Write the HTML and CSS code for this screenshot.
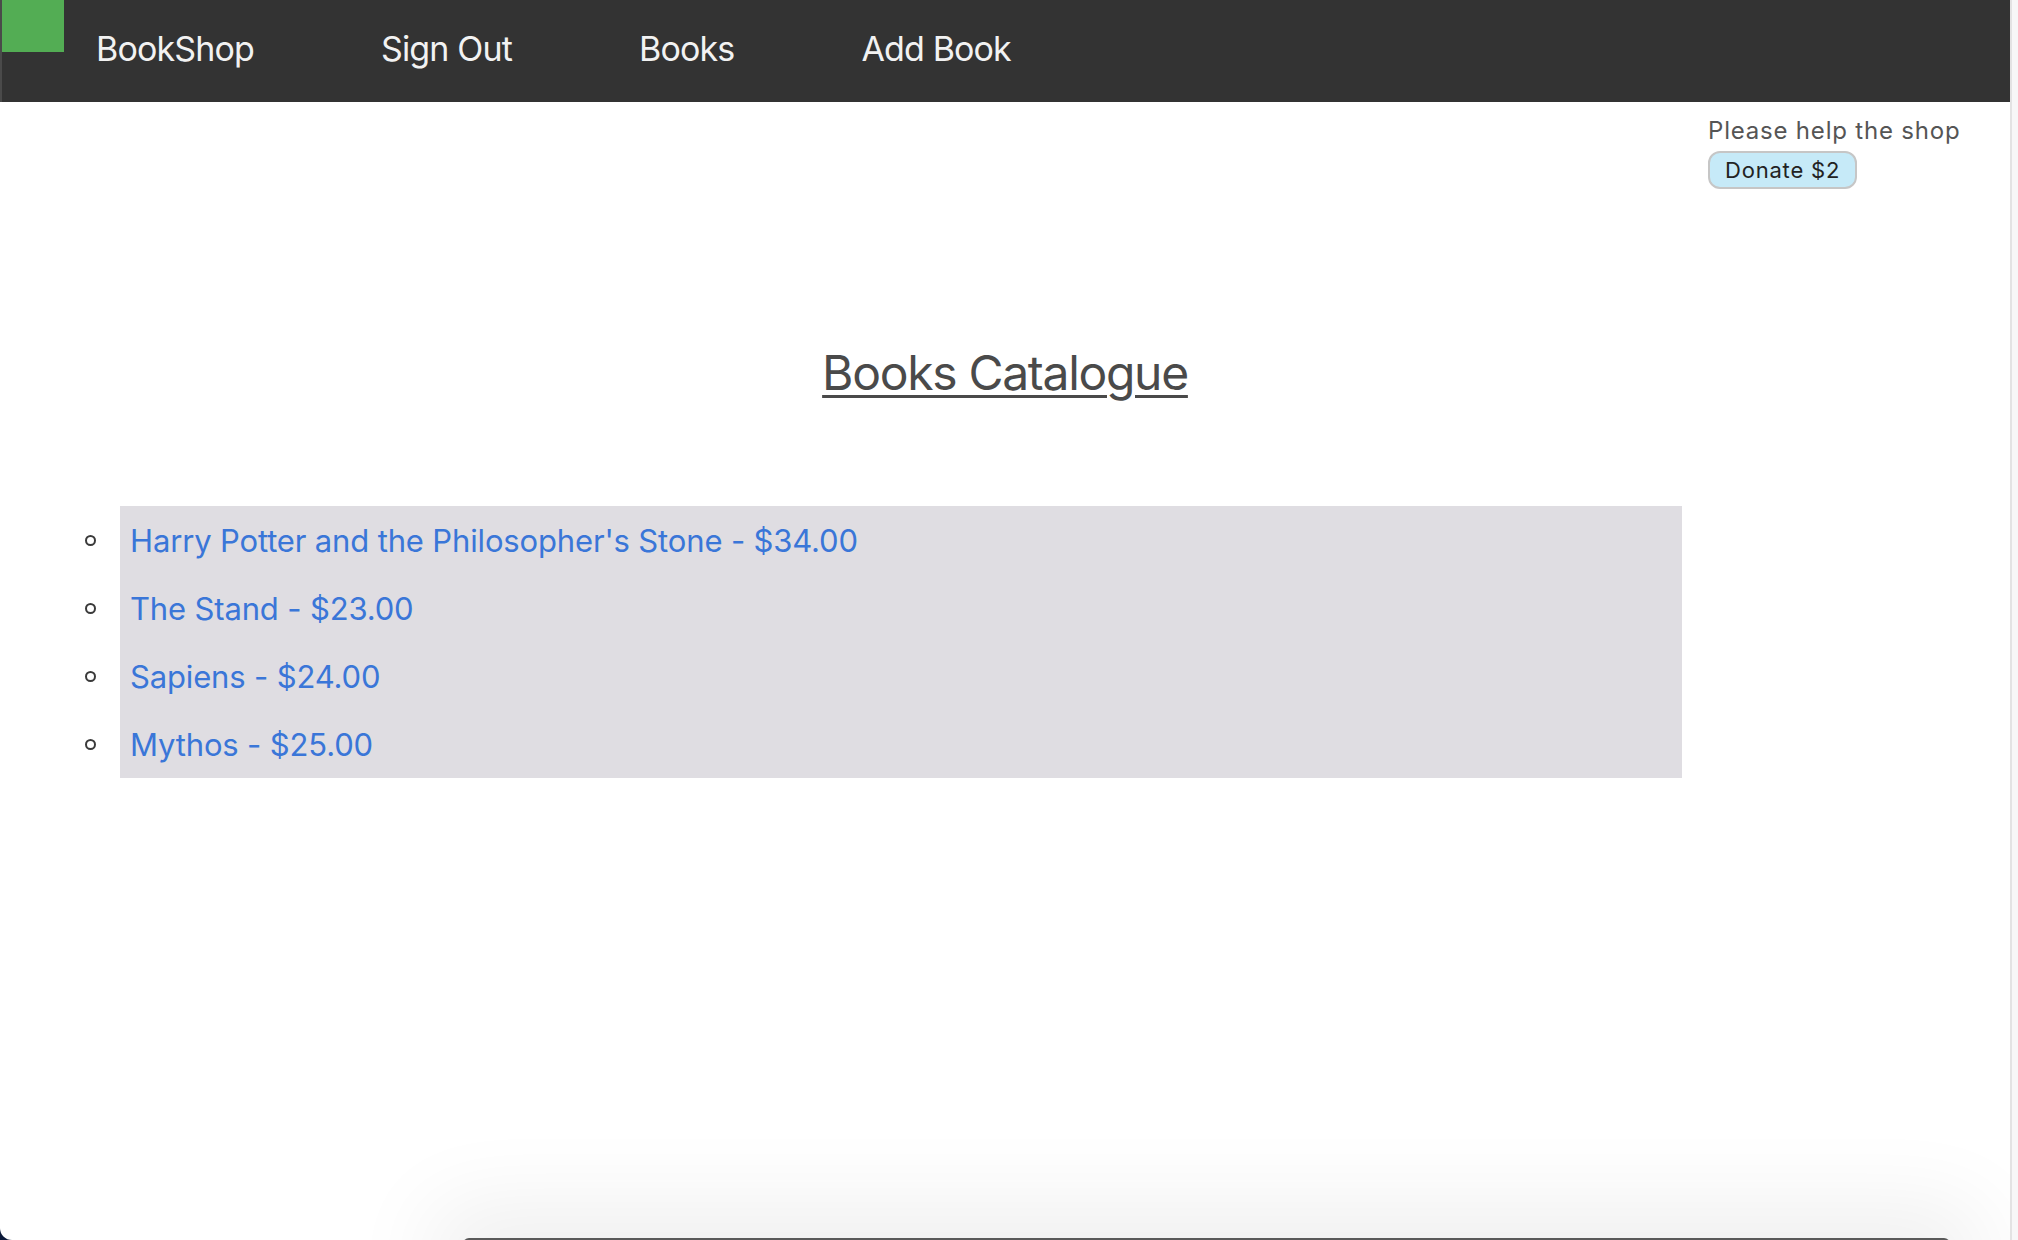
FILE: index.html
```html
<!DOCTYPE html>
<html lang="en">
<head>
<meta charset="utf-8">
<title>BookShop</title>
<link rel="stylesheet" href="styles.css">
</head>
<body>
  <div class="window">
    <header class="topbar">
      <div class="logo"></div>
      <nav class="nav">
        <a class="nav-link" href="#">BookShop</a>
        <a class="nav-link" href="#">Sign Out</a>
        <a class="nav-link" href="#">Books</a>
        <a class="nav-link" href="#">Add Book</a>
      </nav>
    </header>

    <div class="donate-row">
      <div class="donate">
        <p class="donate-text">Please help the shop</p>
        <button class="donate-btn" type="button">Donate $2</button>
      </div>
    </div>

    <h1 class="title">Books Catalogue</h1>

    <ul class="books">
      <li class="book"><a href="#">Harry Potter and the Philosopher's Stone - $34.00</a></li>
      <li class="book"><a href="#">The Stand - $23.00</a></li>
      <li class="book"><a href="#">Sapiens - $24.00</a></li>
      <li class="book"><a href="#">Mythos - $25.00</a></li>
    </ul>

    <div class="dock-shadow"></div>
  </div>
  <div class="edge"></div>
</body>
</html>
```

FILE: styles.css
```css
html, body {
  margin: 0;
  padding: 0;
  height: 100%;
}

body {
  display: flex;
  background: #0c1a3a;
  font-family: Inter, "Noto Sans", "Liberation Sans", sans-serif;
  overflow: hidden;
}

.window {
  position: relative;
  width: 2010px;
  height: 1240px;
  flex: none;
  background: #ffffff;
  border-right: 2px solid #e3e3e3;
  border-bottom-left-radius: 12px;
  overflow: hidden;
}

.edge {
  flex: 1;
  background: #f7f7f7;
}

.topbar {
  display: flex;
  align-items: flex-start;
  height: 102px;
  background: #333333;
  border-left: 2px solid #4a4a4a;
  box-sizing: border-box;
}

.logo {
  width: 62px;
  height: 52px;
  background: #53ad54;
  flex: none;
}

.nav {
  display: flex;
  margin-top: 28px;
  margin-left: 32px;
  gap: 127px;
}

.nav-link {
  color: #f2f2f2;
  text-decoration: none;
  font-size: 34px;
  letter-spacing: -0.85px;
  line-height: normal;
}

.donate-row {
  display: flex;
  justify-content: flex-end;
}

.donate {
  width: 302px;
  padding-top: 15px;
}

.donate-text {
  margin: 0;
  font-size: 24px;
  letter-spacing: 0.8px;
  line-height: 28px;
  color: #555555;
}

.donate-btn {
  display: block;
  margin-top: 6px;
  height: 38px;
  padding: 0 15px;
  font-family: inherit;
  font-size: 22px;
  letter-spacing: 0.8px;
  color: #222222;
  background: #c6eaf8;
  border: 2px solid #c6c6c6;
  border-radius: 12px;
}

.title {
  margin: 154px 0 0;
  text-align: center;
  font-size: 48px;
  font-weight: 400;
  letter-spacing: -1.3px;
  line-height: 60px;
  color: #4a4a4a;
  text-decoration: underline;
  text-decoration-thickness: 3px;
  text-underline-offset: 5px;
}

.books {
  margin: 103px 0 0 120px;
  padding: 0;
  width: 1562px;
  background: #dfdde2;
  list-style: none;
}

.book {
  display: flex;
  align-items: center;
  height: 68px;
  padding-left: 10px;
  font-size: 31px;
  letter-spacing: -0.15px;
}

.book::before {
  content: "";
  flex: none;
  box-sizing: border-box;
  width: 11px;
  height: 11px;
  margin-left: -45px;
  margin-right: 34px;
  border: 2px solid #3a3a3a;
  border-radius: 50%;
}

.book a {
  color: #3a76d8;
  text-decoration: none;
}

.dock-shadow {
  position: absolute;
  left: 463px;
  width: 1487px;
  top: 1238px;
  height: 40px;
  background: #5a5a5a;
  border-radius: 6px;
  box-shadow: 0 0 90px 30px rgba(0, 0, 0, 0.07);
}
```
